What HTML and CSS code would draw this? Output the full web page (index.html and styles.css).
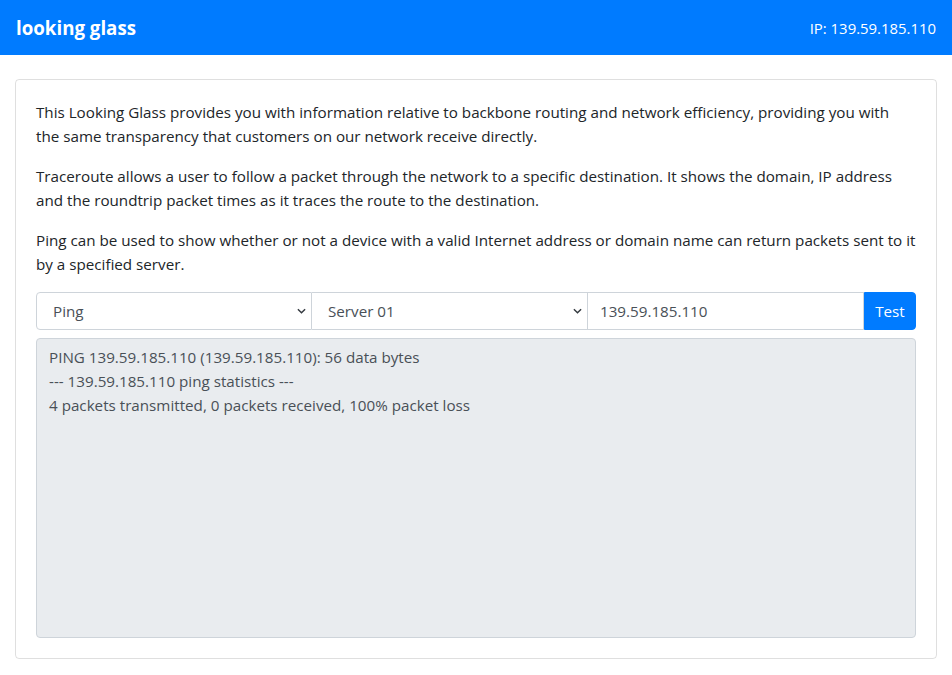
FILE: index.html
```html
<!DOCTYPE html>
<html lang="en">
<head>
<meta charset="utf-8">
<title>looking glass</title>
<link rel="stylesheet" href="styles.css">
</head>
<body>
<nav class="navbar">
  <span class="brand">looking glass</span>
  <span class="ip">IP: 139.59.185.110</span>
</nav>
<main class="container">
  <section class="card">
    <p>This Looking Glass provides you with information relative to backbone routing and network efficiency, providing you with the same transparency that customers on our network receive directly.</p>
    <p>Traceroute allows a user to follow a packet through the network to a specific destination. It shows the domain, IP address and the roundtrip packet times as it traces the route to the destination.</p>
    <p>Ping can be used to show whether or not a device with a valid Internet address or domain name can return packets sent to it by a specified server.</p>
    <form class="input-group">
      <select class="control select first">
        <option>Ping</option>
        <option>Traceroute</option>
      </select>
      <select class="control select">
        <option>Server 01</option>
      </select>
      <input class="control input" type="text" value="139.59.185.110">
      <button class="btn" type="button">Test</button>
    </form>
    <div class="output">PING 139.59.185.110 (139.59.185.110): 56 data bytes
--- 139.59.185.110 ping statistics ---
4 packets transmitted, 0 packets received, 100% packet loss</div>
  </section>
</main>
</body>
</html>
```
FILE: styles.css
```css
* { box-sizing: border-box; }
html, body { margin: 0; padding: 0; }
body {
  font-family: "Open Sans", "Noto Sans", sans-serif;
  font-size: 15.2px;
  line-height: 24px;
  color: #212529;
  background: #fff;
}
.navbar {
  height: 55px;
  background: #007bff;
  color: #fff;
  display: flex;
  align-items: center;
  justify-content: space-between;
  padding: 0 16px;
}
.brand {
  font-size: 18.7px;
  font-weight: 700;
}
.ip {
  font-size: 14.9px;
}
.container {
  padding: 24px 15px 0;
}
.card {
  border: 1px solid rgba(0,0,0,.125);
  border-radius: 4px;
  padding: 20px;
}
.card p {
  margin: 0 0 16px;
}
.input-group {
  display: grid;
  grid-template-columns: minmax(0,1fr) minmax(0,1fr) minmax(0,1fr) 52px;
  height: 38px;
  margin: 0 0 8px;
}
.control {
  width: 100%;
  min-width: 0;
  height: 38px;
  border: 1px solid #ced4da;
  border-left-width: 0;
  background-color: #fff;
  color: #495057;
  font: inherit;
  margin: 0;
  border-radius: 0;
}
.control.first {
  border-left-width: 1px;
  border-radius: 4px 0 0 4px;
}
.select {
  -webkit-appearance: none;
  appearance: none;
  padding: 0 28px 0 16px;
  background-image: url("data:image/svg+xml,%3csvg xmlns='http://www.w3.org/2000/svg' width='10' height='6' viewBox='0 0 10 6'%3e%3cpath fill='none' stroke='%23343a40' stroke-width='1.6' d='M1 1l4 4 4-4'/%3e%3c/svg%3e");
  background-repeat: no-repeat;
  background-position: right 5px center;
  background-size: 9px 6px;
}
.input {
  padding: 0 12px;
  outline: none;
}
.btn {
  width: 52px;
  height: 38px;
  border: 1px solid #007bff;
  background: #007bff;
  color: #fff;
  font: inherit;
  border-radius: 0 4px 4px 0;
  padding: 0;
}
.output {
  height: 300px;
  background: #e9ecef;
  border: 1px solid #ced4da;
  border-radius: 4px;
  padding: 6px 12px;
  color: #495057;
  white-space: pre-wrap;
}
```
